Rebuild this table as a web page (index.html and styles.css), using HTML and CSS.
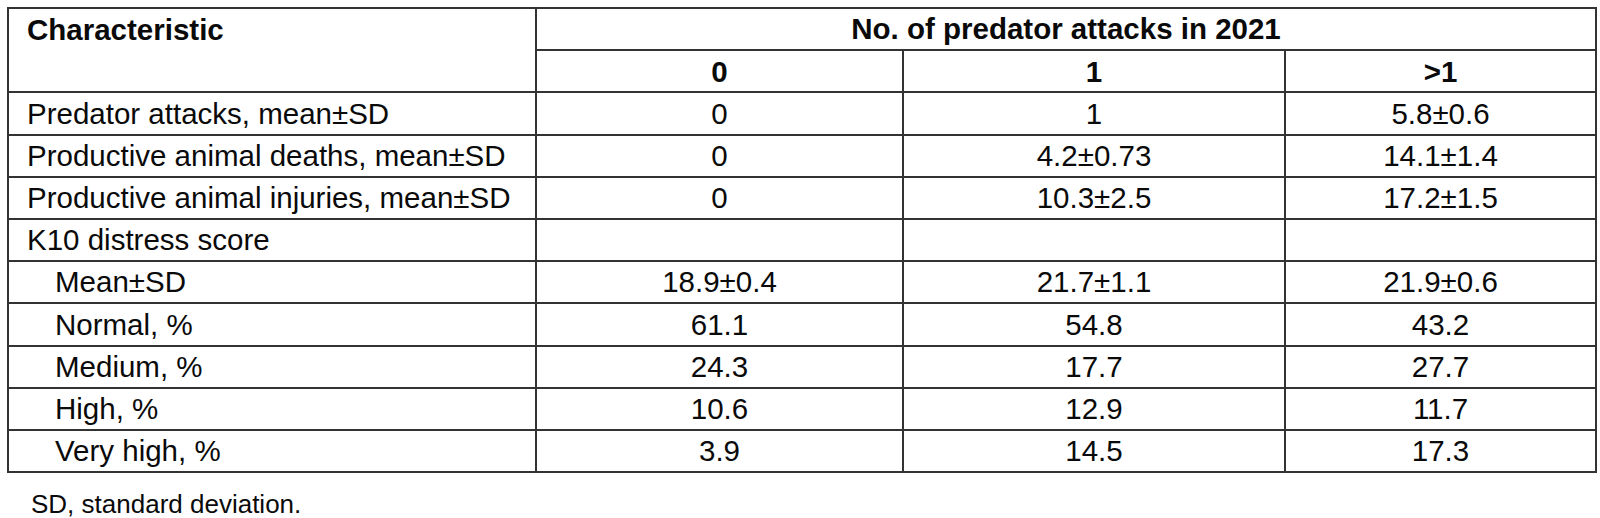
FILE: index.html
```html
<!DOCTYPE html>
<html lang="en">
<head>
<meta charset="utf-8">
<title>Predator attacks table</title>
<link rel="stylesheet" href="styles.css">
</head>
<body>
<div class="page">
  <table class="data">
    <colgroup>
      <col class="c-label">
      <col class="c-0">
      <col class="c-1">
      <col class="c-2">
    </colgroup>
    <thead>
      <tr>
        <th class="label head-label" rowspan="2">Characteristic</th>
        <th class="group" colspan="3">No. of predator attacks in 2021</th>
      </tr>
      <tr>
        <th>0</th>
        <th>1</th>
        <th>&gt;1</th>
      </tr>
    </thead>
    <tbody>
      <tr><td class="label">Predator attacks, mean±SD</td><td>0</td><td>1</td><td>5.8±0.6</td></tr>
      <tr><td class="label">Productive animal deaths, mean±SD</td><td>0</td><td>4.2±0.73</td><td>14.1±1.4</td></tr>
      <tr><td class="label">Productive animal injuries, mean±SD</td><td>0</td><td>10.3±2.5</td><td>17.2±1.5</td></tr>
      <tr><td class="label">K10 distress score</td><td></td><td></td><td></td></tr>
      <tr><td class="label sub">Mean±SD</td><td>18.9±0.4</td><td>21.7±1.1</td><td>21.9±0.6</td></tr>
      <tr><td class="label sub">Normal, %</td><td>61.1</td><td>54.8</td><td>43.2</td></tr>
      <tr><td class="label sub">Medium, %</td><td>24.3</td><td>17.7</td><td>27.7</td></tr>
      <tr><td class="label sub">High, %</td><td>10.6</td><td>12.9</td><td>11.7</td></tr>
      <tr><td class="label sub">Very high, %</td><td>3.9</td><td>14.5</td><td>17.3</td></tr>
    </tbody>
  </table>
  <p class="note">SD, standard deviation.</p>
</div>
</body>
</html>
```

FILE: styles.css
```css
html, body {
  margin: 0;
  padding: 0;
  background: #ffffff;
}

.page {
  padding: 7px 0 0 7px;
  font-family: "Liberation Sans", Arial, sans-serif;
  color: #0a0a0a;
}

.data {
  border-collapse: collapse;
  table-layout: fixed;
  width: 1590px;
  font-size: 29.5px;
}

.c-label { width: 528px; }
.c-0 { width: 367px; }
.c-1 { width: 382px; }
.c-2 { width: 311px; }

.data th,
.data td {
  border: 2px solid #333333;
  height: 42.2px;
  padding: 0 4px;
  text-align: center;
  vertical-align: middle;
  white-space: nowrap;
  line-height: 1;
  box-sizing: border-box;
}

.data th {
  font-weight: bold;
}

.data .label {
  text-align: left;
  padding-left: 18px;
}

.data .sub {
  padding-left: 46px;
}

.data .head-label {
  vertical-align: top;
  padding-top: 6px;
}

.note {
  margin: 16px 0 0 24px;
  font-size: 26px;
  line-height: 30px;
}
```
